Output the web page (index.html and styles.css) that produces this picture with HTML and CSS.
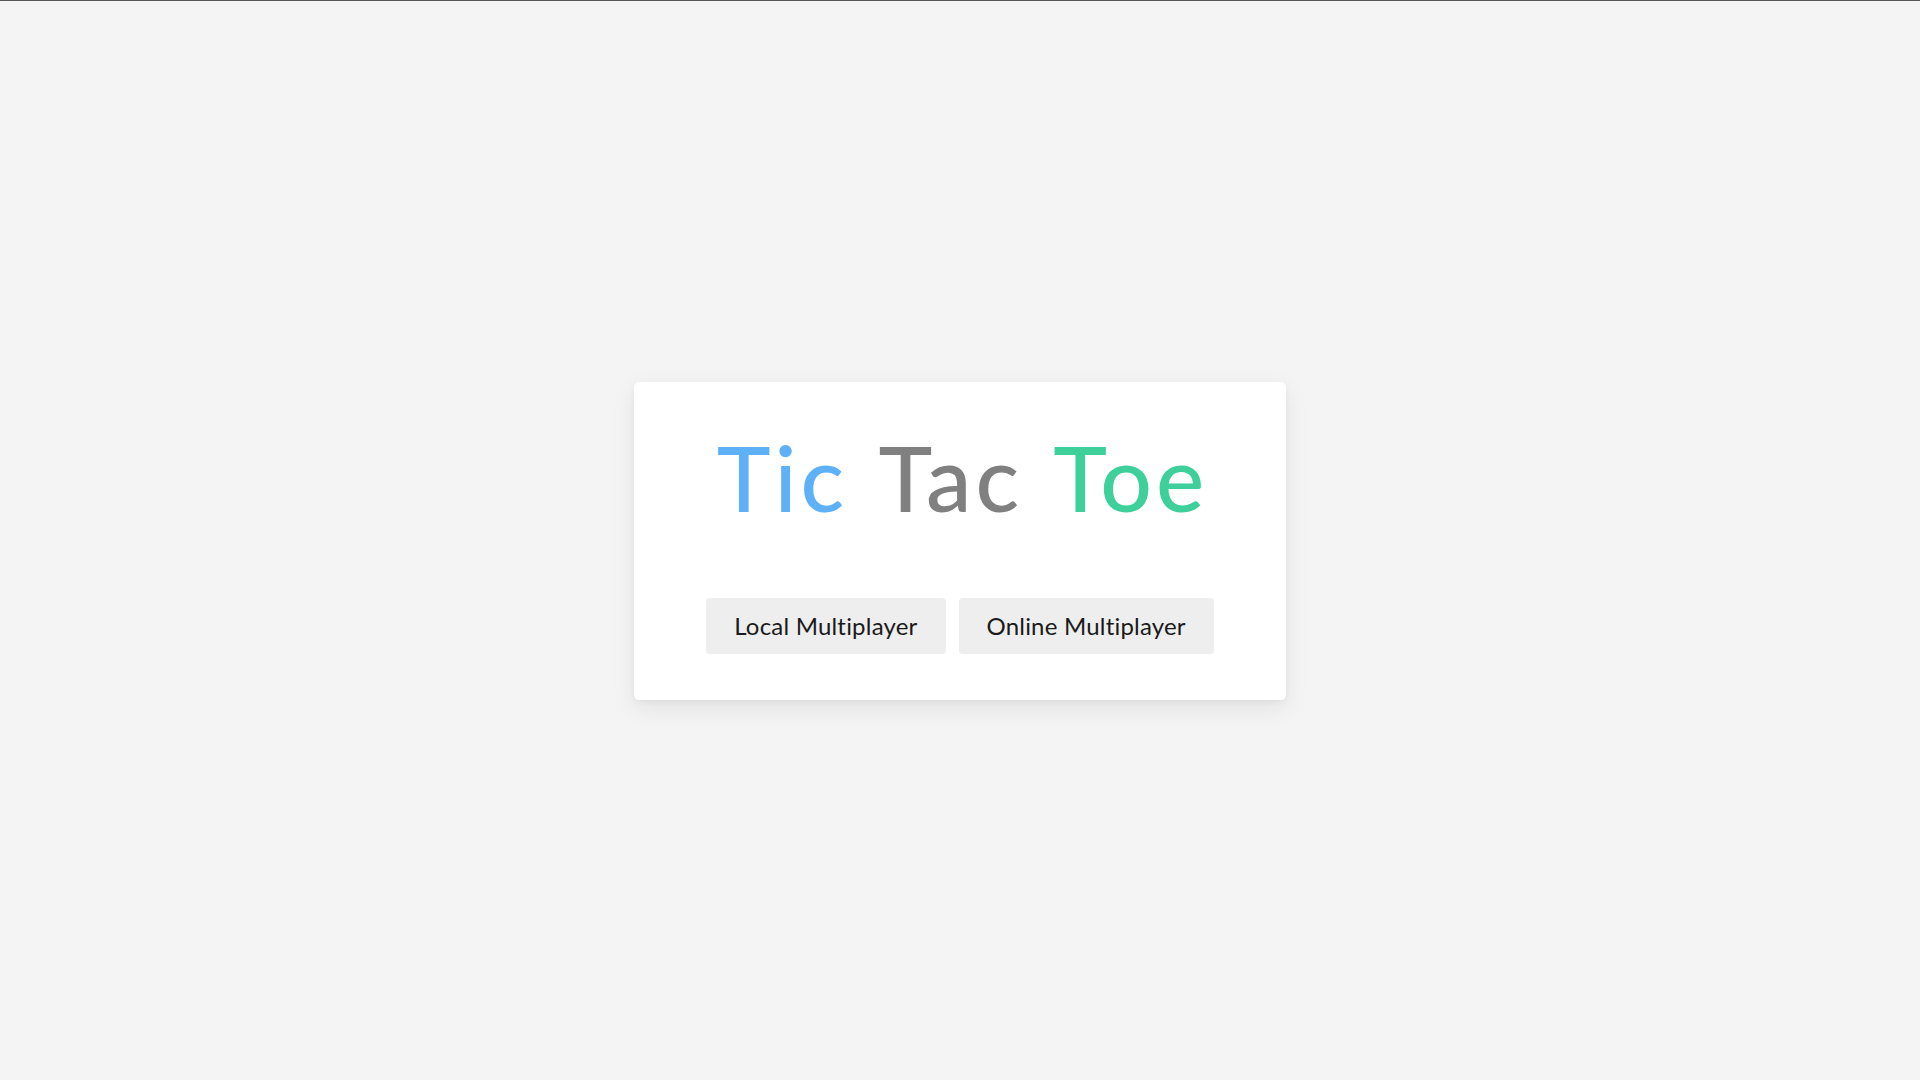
FILE: index.html
```html
<!DOCTYPE html>
<html lang="en">
<head>
<meta charset="utf-8">
<title>Tic Tac Toe</title>
<link rel="stylesheet" href="styles.css">
</head>
<body>
<div class="topline"></div>
<main class="stage">
  <section class="card">
    <h1 class="title"><span class="tic">Tic</span> <span class="tac">Tac</span> <span class="toe">Toe</span></h1>
    <div class="actions">
      <button class="btn">Local Multiplayer</button>
      <button class="btn">Online Multiplayer</button>
    </div>
  </section>
</main>
</body>
</html>
```
FILE: styles.css
```css
* { box-sizing: border-box; }
html, body { margin: 0; padding: 0; height: 100%; }
body {
  background: #f4f4f4;
  font-family: Lato, "Noto Sans", sans-serif;
  display: flex;
  flex-direction: column;
}
.topline { height: 1px; background: #555; flex: none; }
.stage {
  flex: 1;
  display: flex;
  align-items: center;
  justify-content: center;
}
.card {
  width: 652px;
  height: 318px;
  background: #fff;
  border-radius: 5px;
  box-shadow: 0 8px 24px rgba(0,0,0,0.08), 0 2px 6px rgba(0,0,0,0.04);
  display: flex;
  flex-direction: column;
  align-items: center;
  padding-top: 47px;
}
.title {
  margin: 0 0 0 5px;
  font-size: 91px;
  line-height: 96px;
  font-weight: 500;
  letter-spacing: 4px;
  word-spacing: 6px;
}
.tic { color: #5eb1f7; }
.tac { color: #808080; }
.toe { color: #3ecf9b; }
.actions {
  margin-top: 73px;
  display: flex;
  gap: 13px;
}
.btn {
  height: 56px;
  padding: 0 28px;
  border: none;
  border-radius: 4px;
  background: #eeeeee;
  color: #1a1a1a;
  font-family: Lato, "Noto Sans", sans-serif;
  font-size: 24px;
  letter-spacing: 0.2px;
}
```
